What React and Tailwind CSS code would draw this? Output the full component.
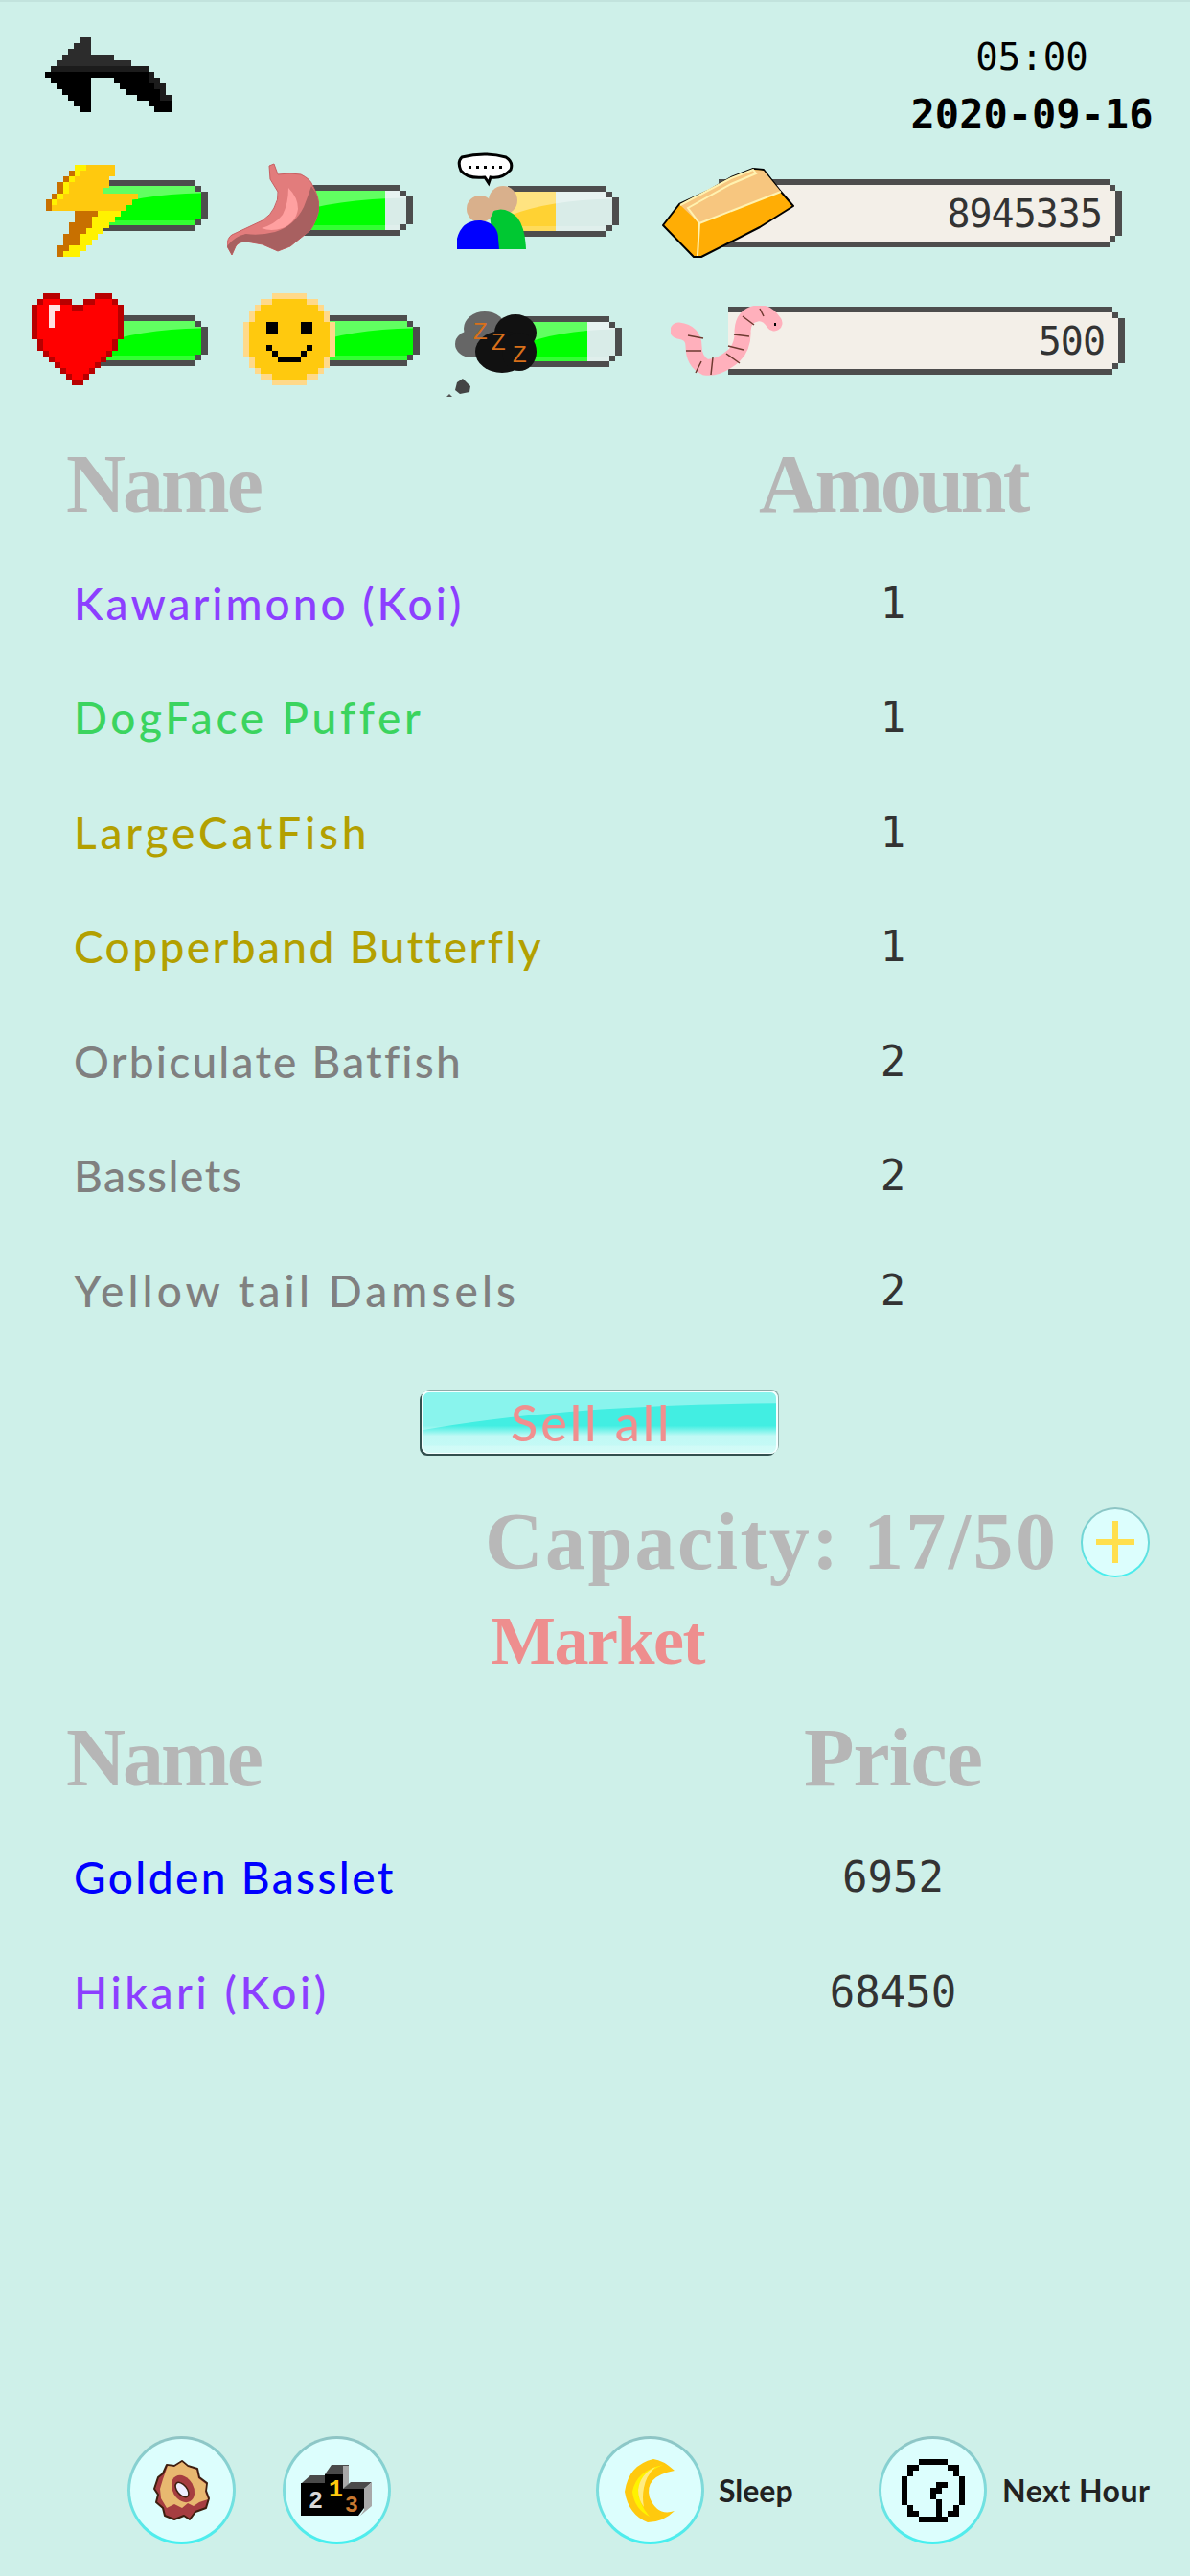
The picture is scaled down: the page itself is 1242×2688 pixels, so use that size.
import React from 'react'

const ARROW = [
  '......gg..............',
  '.....ggg..............',
  '....gggg..............',
  '...ggggggggg..........',
  '..ggggggggggggg.......',
  '.hhhhhhhhhhhhhhhhh....',
  'kkkkkkkkkkkkkkkkkkh...',
  '.kkkkkkk....kkkkkkhh..',
  '..kkkkkk.....kkkkkkhh.',
  '...kkkkk......kkkkkkh.',
  '....kkkk........kkkkhh',
  '.....kkk..........kkkk',
  '......kk...........kkk',
]

const HEART = [
  '..ddd......ddd..',
  '.drrrdd..ddrrrd.',
  'drrwwrrddrrrrrrd',
  'drrwrrrrrrrrrrrd',
  'drrwrrrrrrrrrrrd',
  'drrwrrrrrrrrrrrd',
  'drrrrrrrrrrrrrrd',
  'drrrrrrrrrrrrrrd',
  '.drrrrrrrrrrrrd.',
  '.drrrrrrrrrrrrd.',
  '..drrrrrrrrrrd..',
  '...drrrrrrrrd...',
  '....drrrrrrd....',
  '.....drrrrd.....',
  '......drrd......',
  '.......dd.......',
]

const BOLT = [
  '.....yyaaaaa....',
  '....byaaaaaa....',
  '...byaaaaaa.....',
  '..byaaaaaaa.....',
  '..byaaaaaa......',
  '.byaaaaaaaaaaaaa',
  'byaaaaaaaaaaaaa.',
  'baaaaaaaaaaaaa..',
  '.....bbbbyyyy...',
  '.....bbbyyyy....',
  '....bbbbyyy.....',
  '....bbbyyy......',
  '...bbbyyy.......',
  '...bbbyy........',
  '..bbyyy.........',
  '..byyy..........',
]

const SMILE = [
  '.....llllll.....',
  '...llaaaaaall...',
  '..laaaaaaaaaal..',
  '.laaaaaaaaaaaal.',
  '.laaaaaaaaaaaal.',
  'laaakkaaaakkaaal',
  'laaakkaaaakkaaal',
  'laaaaaaaaaaaaaal',
  'laaaaaaaaaaaaaal',
  'laaakaaaaaakaaal',
  'laaaakaaaakaaaal',
  '.laaaakkkkaaaal.',
  '.laaaaaaaaaaaal.',
  '..laaaaaaaaaal..',
  '...llaaaaaall...',
  '.....llllll.....',
]

const CLOCK = [
  '...#####...',
  '.##.....##.',
  '.#.......#.',
  '#.........#',
  '#.....##..#',
  '#....##...#',
  '#....#....#',
  '#.....#...#',
  '.#....#..#.',
  '.##...#.##.',
  '...#####...',
]

const PALETTE = {
  d: '#b80000',
  r: '#ff0000',
  w: '#ffe0e0',
  b: '#c87000',
  y: '#fff200',
  a: '#ffc90e',
  l: '#ffd98a',
  k: '#000000',
  g: '#2c2c2c',
  h: '#1c1c1c',
  '#': '#000000',
}

function Pixels({ rows, size, className }) {
  return (
    <svg
      className={className}
      width={rows[0].length * size}
      height={rows.length * size}
      viewBox={`0 0 ${rows[0].length} ${rows.length}`}
      shapeRendering="crispEdges"
    >
      {rows.map((row, y) =>
        row.split('').map((c, x) =>
          c === '.' ? null : <rect key={`${x}-${y}`} x={x} y={y} width="1.02" height="1.02" fill={PALETTE[c]} />
        )
      )}
    </svg>
  )
}

// curved glass highlight laid over meters and the sell button
function Gloss() {
  return (
    <svg className="absolute inset-0 w-full h-full" viewBox="0 0 100 100" preserveAspectRatio="none">
      <path d="M0 0 H100 V18 Q40 20 0 62 Z" fill="#fff" fillOpacity="0.38" />
      <path d="M0 88 H100 V100 H0 Z" fill="#fff" fillOpacity="0.2" />
    </svg>
  )
}

function Stomach() {
  return (
    <svg width="96" height="97" viewBox="0 0 96 97">
      <path d="M44 3 L49 1 L53 12 Q66 10 77 12 Q87 17 89 23 Q96 35 96 47 Q94 60 87 70 L66 87 L53 92 L37 85 L20 82 Q12 82 9 87 L5 96 L0 87 Q0 78 5 75 L20 68 L37 60 Q46 54 49 47 Q54 38 53 30 L45 17 Z" fill="#e27c7c" stroke="#c85f62" strokeWidth="1" />
      <path d="M96 47 Q94 60 87 70 L66 87 L53 92 L37 85 L20 82 Q12 82 9 87 L5 96 L0 87 Q8 76 20 74 Q34 76 50 72 Q70 66 80 46 Q84 36 88 24 Q96 35 96 47 Z" fill="#a86060" />
      <path d="M64 26 Q74 36 74 48 Q72 62 58 68 Q46 72 36 68 Q50 64 58 54 Q64 42 64 26 Z" fill="#ffa0a0" />
    </svg>
  )
}

function People() {
  return (
    <svg width="90" height="104" viewBox="0 0 90 104">
      <path d="M12 7 Q36 1 58 7 Q66 12 63 20 Q54 30 42 28 L40 34 L36 28 Q18 30 11 21 Q7 12 12 7 Z" fill="#fff" stroke="#000" strokeWidth="3" />
      <g fill="#000">
        <rect x="19" y="16" width="3" height="3" />
        <rect x="27" y="16" width="3" height="3" />
        <rect x="35" y="16" width="3" height="3" />
        <rect x="43" y="16" width="3" height="3" />
        <rect x="51" y="16" width="3" height="3" />
      </g>
      <ellipse cx="55" cy="52" rx="15" ry="15" fill="#d9b08c" />
      <path d="M41 65 Q56 56 70 70 Q78 80 79 103 H45 Z" fill="#00c832" />
      <ellipse cx="31" cy="61" rx="14" ry="14" fill="#d9b08c" />
      <path d="M7 103 V92 Q12 72 32 73 Q50 76 50 92 L51 103 Z" fill="#0000ff" />
    </svg>
  )
}

function Cloud() {
  return (
    <svg width="96" height="92" viewBox="0 0 96 92">
      <g fill="#666">
        <ellipse cx="40" cy="20" rx="22" ry="18" />
        <ellipse cx="26" cy="36" rx="17" ry="14" />
      </g>
      <g fill="#111">
        <ellipse cx="72" cy="24" rx="22" ry="19" />
        <ellipse cx="58" cy="44" rx="28" ry="22" />
        <ellipse cx="76" cy="44" rx="18" ry="20" />
      </g>
      <g fontFamily="'Liberation Sans', sans-serif" fill="#d8701a" fontSize="24">
        <text x="28" y="31">Z</text>
        <text x="47" y="42">Z</text>
        <text x="69" y="55">Z</text>
      </g>
      <path d="M11 76 L17 72 L25 80 L24 86 L14 88 L9 84 Z" fill="#444" />
      <path d="M0 91 L3 88 L6 91 Z" fill="#555" />
    </svg>
  )
}

function GoldBar() {
  return (
    <svg width="140" height="96" viewBox="0 0 140 96">
      <path d="M1 60 L18 38 L48 24 L72 10 L95 1 L106 2 L124 25 L137 40 L102 62 L41 93 H33 Z" fill="#ffad05" stroke="#000" strokeWidth="2" strokeLinejoin="round" />
      <path d="M19 39 L72 11 L95 2 L106 3 L124 25 L39 58 Z" fill="#f7c67f" />
      <path d="M19 39 L72 11 L95 2 L98 6 L72 17 L27 42 L39 58 L124 25 M39 58 L37 92" fill="none" stroke="#fff2b0" strokeWidth="2" />
    </svg>
  )
}

function Worm() {
  return (
    <svg width="118" height="74" viewBox="0 0 118 74">
      <path d="M108 18 Q100 6 90 8 Q76 10 75 26 Q76 42 66 52 Q50 66 36 64 Q24 58 24 42 Q24 28 8 26" fill="none" stroke="#ffb0bc" strokeWidth="17" strokeLinecap="round" />
      <g stroke="#6e3a30" strokeWidth="1.5" fill="none">
        <path d="M93 3 L97 11 M75 11 L87 20 M66 30 L82 32 M60 42 L76 46 M58 50 L72 60 M44 54 L42 72 M32 58 L26 70 M16 47 L32 47 M18 31 L34 34" />
      </g>
      <rect x="108" y="18" width="2" height="3" fill="#000" />
    </svg>
  )
}

function Gear() {
  return (
    <svg width="60" height="64" viewBox="0 0 60 64">
      <path d="M14 5 L22 6 L30 1 L36 6 L46 9 L48 18 L56 24 L55 32 L58 40 L55 50 L44 54 L38 62 L32 58 L22 62 L12 58 L10 50 L3 44 L5 36 L1 30 L5 18 L10 14 Z" fill="#a63d40" stroke="#3d1f0f" strokeWidth="2" strokeLinejoin="round" />
      <path d="M15 6 L22 7 L30 2 L36 7 L45 10 L47 19 L55 25 L54 33 L57 41 L48 44 L42 48 L36 45 L30 50 L22 46 L14 50 L8 40 L7 30 L10 20 Z" fill="#e8b870" />
      <ellipse cx="31" cy="30" rx="11" ry="15" fill="#a63d40" transform="rotate(-30 31 30)" />
      <ellipse cx="30" cy="31" rx="5" ry="9" fill="#eef" stroke="#3d1f0f" strokeWidth="1.5" transform="rotate(-40 30 31)" />
    </svg>
  )
}

function Podium() {
  return (
    <svg width="76" height="56" viewBox="0 0 76 56">
      <path d="M25 11 L32 1 H50 V20 L44 26 V11 Z" fill="#4a4a4a" />
      <path d="M44 2 H50 V20 L44 26 Z" fill="#a8a8a8" />
      <path d="M1 20 L10 12 H25 V20 Z" fill="#4a4a4a" />
      <path d="M44 26 L52 19 H74 L66 26 Z" fill="#4a4a4a" />
      <path d="M66 26 L74 19 V44 L62 54 L66 48 Z" fill="#a8a8a8" />
      <path d="M0 20 H25 V11 H44 V26 H66 V46 L60 54 H0 Z" fill="#000" />
      <g fontFamily="'Liberation Mono', monospace" fontWeight="700">
        <text x="8" y="46" fontSize="25" fill="#d8d8d8">2</text>
        <text x="29" y="34" fontSize="25" fill="#ffc90e">1</text>
        <text x="46" y="50" fontSize="23" fill="#c87830">3</text>
      </g>
    </svg>
  )
}

function Moon() {
  return (
    <svg width="54" height="66" viewBox="0 0 54 66">
      <path d="M52 12 Q40 1 30 0 Q4 6 0 34 Q4 58 24 66 Q40 66 52 54 Q34 60 26 40 Q20 18 52 12 Z" fill="#ffc90e" />
      <path d="M40 6 Q12 12 8 34 Q10 52 26 60 Q14 46 14 32 Q16 16 40 6 Z" fill="#fff200" />
      <path d="M32 8 Q16 16 14 32 Q14 42 20 50 Q18 40 20 30 Q22 18 32 8 Z" fill="#ffec80" />
    </svg>
  )
}

// pixel end-cap shared by the meters
function Frame({ children }) {
  return (
    <>
      <div className="absolute inset-y-0 left-0 right-[13px] border-y-[6px] border-[#4d4d4d]" />
      {children}
      <div className="absolute right-[7px] top-[6px] w-[6px] h-[6px] bg-[#4d4d4d]" />
      <div className="absolute right-[7px] bottom-[6px] w-[6px] h-[6px] bg-[#4d4d4d]" />
      <div className="absolute right-0 top-[12px] bottom-[12px] w-[7px] bg-[#4d4d4d]" />
    </>
  )
}

function Bar({ width, fill, tone = 'bg-[#00ff00]' }) {
  return (
    <div className={`relative h-[53px] ml-auto ${width}`}>
      <Frame>
        <div className="absolute top-[6px] bottom-[6px] left-0 right-[7px] overflow-hidden bg-[#d9ece8]">
          <div className={`h-full ${tone}`} style={{ width: fill }} />
          <Gloss />
        </div>
      </Frame>
    </div>
  )
}

function MoneyBar({ width, mt, value }) {
  return (
    <div className={`relative ml-auto h-[71px] ${width} ${mt}`}>
      <Frame>
        <div className="absolute top-[6px] bottom-[6px] left-0 right-[7px] bg-[#f3efe8] flex items-center justify-end pr-[14px]">
          <span className="text-[40px] leading-none tracking-[-1px] text-[#333] font-['DejaVu_Sans_Mono',monospace]">{value}</span>
        </div>
      </Frame>
    </div>
  )
}

function Header({ left, right, rightClass }) {
  return (
    <div className="grid grid-cols-[772px_320px] h-[76px] items-center">
      <span className="pl-[69px] pb-[6px] text-[86px] leading-none tracking-[-3px] font-bold text-[#b6b6b6] font-['Liberation_Serif',serif]">{left}</span>
      <span className={`text-center pb-[6px] text-[86px] leading-none font-bold text-[#b6b6b6] font-['Liberation_Serif',serif] ${rightClass}`}>{right}</span>
    </div>
  )
}

function Row({ name, value, color, track }) {
  return (
    <div className="grid grid-cols-[772px_320px] h-[119.5px] items-center">
      <span className={`pl-[77px] text-[46px] leading-none font-medium font-['Lato',sans-serif] ${color} ${track}`}>{name}</span>
      <span className="text-center text-[44px] leading-none text-[#333] font-['DejaVu_Sans_Mono',monospace]">{value}</span>
    </div>
  )
}

function RoundButton({ children, className = '' }) {
  return (
    <div className={`w-[113px] h-[113px] rounded-full p-[3px] bg-[linear-gradient(#8fc4c4_0%,#7fdcdc_50%,#45f0f0_100%)] ${className}`}>
      <div className="w-full h-full rounded-full bg-[#dcfefd] flex items-center justify-center">{children}</div>
    </div>
  )
}

const INVENTORY = [
  { name: 'Kawarimono (Koi)', value: '1', color: 'text-[#8c3fff]', track: 'tracking-[3px]' },
  { name: 'DogFace Puffer', value: '1', color: 'text-[#3bd45f]', track: 'tracking-[3.7px]' },
  { name: 'LargeCatFish', value: '1', color: 'text-[#b3a000]', track: 'tracking-[3.8px]' },
  { name: 'Copperband Butterfly', value: '1', color: 'text-[#b3a000]', track: 'tracking-[2.4px]' },
  { name: 'Orbiculate Batfish', value: '2', color: 'text-[#808080]', track: 'tracking-[2.2px]' },
  { name: 'Basslets', value: '2', color: 'text-[#808080]', track: 'tracking-[1.5px]' },
  { name: 'Yellow tail Damsels', value: '2', color: 'text-[#808080]', track: 'tracking-[4.1px]' },
]

export default function App() {
  return (
    <div className="w-[1242px] h-[2688px] overflow-hidden bg-[#cef0e9] shadow-[inset_0_2px_0_#c2e3dd] flex flex-col">
      {/* Top bar */}
      <div className="flex justify-between h-[172px]">
        <div className="pl-[47px] pt-[39px]">
          <Pixels rows={ARROW} size={6} />
        </div>
        <div className="w-[256px] mr-[37px] pt-[35px] text-center text-black font-['DejaVu_Sans_Mono',monospace]">
          <div className="text-[39px] leading-[50px]">05:00</div>
          <div className="mt-[10px] text-[42px] leading-[50px] font-bold whitespace-nowrap">2020-09-16</div>
        </div>
      </div>

      {/* Stats */}
      <div className="flex items-start h-[96px] pl-[48px]">
        <div className="relative w-[169px]">
          <div className="mt-[16px]"><Bar width="w-[117px]" fill="100%" /></div>
          <Pixels rows={BOLT} size={6} className="absolute left-0 top-0" />
        </div>
        <div className="relative w-[194px] ml-[20px]">
          <div className="mt-[21px]"><Bar width="w-[131px]" fill="82%" /></div>
          <div className="absolute left-0 top-[-2px]"><Stomach /></div>
        </div>
        <div className="relative w-[169px] ml-[46px]">
          <div className="mt-[22px]"><Bar width="w-[116px]" fill="46%" tone="bg-[#ffd233]" /></div>
          <div className="absolute left-[-7px] top-[-15px]"><People /></div>
        </div>
        <div className="relative w-[480px] ml-[45px]">
          <MoneyBar width="w-[421px]" mt="mt-[15px]" value="8945335" />
          <div className="absolute left-0 top-[3px]"><GoldBar /></div>
        </div>
      </div>

      <div className="flex items-start h-[96px] mt-[38px] pl-[33px]">
        <div className="relative w-[184px]">
          <div className="mt-[23px]"><Bar width="w-[117px]" fill="100%" /></div>
          <Pixels rows={HEART} size={6} className="absolute left-0 top-0" />
        </div>
        <div className="relative w-[184px] ml-[37px]">
          <div className="mt-[23px]"><Bar width="w-[118px]" fill="100%" /></div>
          <Pixels rows={SMILE} size={6} className="absolute left-0 top-0" />
        </div>
        <div className="relative w-[183px] ml-[28px]">
          <div className="mt-[24px]"><Bar width="w-[109px]" fill="72%" /></div>
          <div className="absolute left-0 top-[17px]"><Cloud /></div>
        </div>
        <div className="relative w-[474px] ml-[51px]">
          <MoneyBar width="w-[414px]" mt="mt-[14px]" value="500" />
          <div className="absolute left-0 top-[13px]"><Worm /></div>
        </div>
      </div>

      {/* Inventory */}
      <div className="mt-[60px]">
        <Header left="Name" right="Amount" rightClass="tracking-[-3.5px]" />
      </div>
      <div className="mt-[32px]">
        {INVENTORY.map((f) => (
          <Row key={f.name} {...f} />
        ))}
      </div>

      <div className="relative mt-[44px] ml-[440px] w-[372px] h-[66px] rounded-[8px] border-x-2 border-t-2 border-b border-[#f4ffff] shadow-[-2px_2px_0_0_#33504f,1px_-1px_0_0_#8faaa8] bg-[linear-gradient(#42eee2_0%,#42eee2_55%,#c0f9f5_72%,#c8faf6_100%)] flex items-center overflow-hidden">
        <Gloss />
        <span className="relative ml-[91px] text-[52px] leading-none tracking-[3px] font-medium text-[#f08f8f] font-['Lato',sans-serif]">Sell all</span>
      </div>

      <div className="mt-[56px] flex items-center h-[73px] pl-[506px]">
        <span className="text-[84px] leading-none tracking-[2.4px] font-bold text-[#b8b8b8] font-['Liberation_Serif',serif]">Capacity: 17/50</span>
        <div className="ml-auto mr-[42px] w-[72px] h-[73px] rounded-full p-[2px] bg-[linear-gradient(#8fc4c4,#45f0f0)]">
          <div className="w-full h-full rounded-full bg-[#dcfefd] flex items-center justify-center">
            <svg width="40" height="44" viewBox="0 0 40 44">
              <path d="M0 22 H40 M20 0 V44" stroke="#ffdf4d" strokeWidth="6" />
            </svg>
          </div>
        </div>
      </div>

      <div className="mt-[40px] pl-[512px] h-[52px] flex items-center">
        <span className="text-[72px] leading-none tracking-[-1.5px] font-bold text-[#ee8e8e] font-['Liberation_Serif',serif]">Market</span>
      </div>

      {/* Market */}
      <div className="mt-[53px]">
        <Header left="Name" right="Price" rightClass="tracking-[-1px]" />
      </div>
      <div className="mt-[33px]">
        <Row name="Golden Basslet" value="6952" color="text-[#0000ff]" track="tracking-[2.4px]" />
        <Row name="Hikari (Koi)" value="68450" color="text-[#8c3fff]" track="tracking-[3.6px]" />
      </div>

      {/* Bottom buttons */}
      <div className="mt-auto mb-[33px] flex items-center pl-[133px]">
        <RoundButton><Gear /></RoundButton>
        <RoundButton className="ml-[49px]"><Podium /></RoundButton>
        <RoundButton className="ml-[214px]"><Moon /></RoundButton>
        <span className="ml-[15px] w-[84px] text-[32px] leading-none font-bold text-[#222] font-['Lato',sans-serif]">Sleep</span>
        <RoundButton className="ml-[83px]"><Pixels rows={CLOCK} size={6} /></RoundButton>
        <span className="ml-[16px] text-[32px] leading-none font-bold text-[#222] whitespace-nowrap tracking-[0.5px] font-['Lato',sans-serif]">Next Hour</span>
      </div>
    </div>
  )
}
